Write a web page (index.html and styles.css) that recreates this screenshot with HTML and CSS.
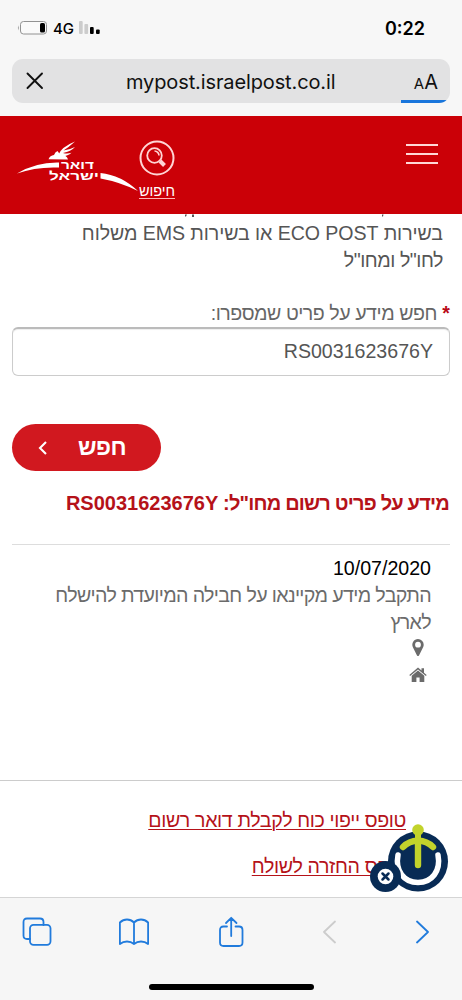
FILE: index.html
```
<!DOCTYPE html>
<html lang="he">
<head>
<meta charset="utf-8">
<title>mypost.israelpost.co.il</title>
<link rel="stylesheet" href="styles.css">
</head>
<body>
<div class="phone">
  <div class="status">
    <svg class="battery" width="32" height="16" viewBox="0 0 32 16"><rect x="3.500" y="1.500" width="26" height="12.500" rx="3" fill="#fafafa" stroke="#929292"/><path d="M1.800 5.200Q0 7.800 1.800 10.400Z" fill="#999"/><rect x="23" y="3" width="5" height="9.500" rx="1.600" fill="#000"/></svg>
    <span class="network">4G</span>
    <svg class="signal" width="23" height="15" viewBox="0 0 23 15"><rect x="1" y="1" width="3.700" height="13" rx="1" fill="#ccc"/><rect x="6.400" y="4" width="3.700" height="10" rx="1" fill="#ccc"/><rect x="12" y="7" width="3.700" height="7" rx="1"/><rect x="18" y="9.500" width="3.700" height="4.500" rx="1"/></svg>
    <span class="clock">0:22</span>
  </div>
  <div class="address-wrap">
    <div class="address">
      <svg class="close" width="18" height="18" viewBox="0 0 18 18"><path d="M1.500 1.500 16 16M16 1.500 1.500 16" fill="none" stroke="#111" stroke-width="1.900" stroke-linecap="round"/></svg>
      <span class="url">mypost.israelpost.co.il</span>
      <span class="reader"><small>A</small>A</span>
      <div class="progress"></div>
    </div>
  </div>
  <header class="header">
    <svg class="logo" width="124" height="56" viewBox="0 0 124 56">
      <path d="M1 35.500Q20 24 43 24.500V29.500Q20 28.500 1 35.500Z" fill="#fff"/>
      <path d="M84.500 35Q105 37 122 53Q104 44 84.500 40.500Z" fill="#fff"/>
      <path d="M32.500 21.200Q34 17.500 38 17Q39 14 41.500 13L44 16.500Q51 17 52 21.500Z" fill="#fff"/>
      <path d="M42 17.500Q45 9 59 3.500Q53 9 47.500 12.500Q53 12 59 9Q55 13.500 47 15Q51 16.300 55.500 14.800Q51 19 44 18Z" fill="#fff"/>
      <text class="logo-text" x="45" y="31" textLength="33" lengthAdjust="spacingAndGlyphs">דואר</text>
      <text class="logo-text" x="33" y="42" textLength="50" lengthAdjust="spacingAndGlyphs">ישראל</text>
    </svg>
    <div class="search">
      <svg width="36" height="36" viewBox="0 0 36 36" fill="none" stroke="#ffd5d5"><circle cx="18" cy="18" r="16.500" stroke-width="2"/><circle cx="15.500" cy="15.500" r="7.300" stroke-width="1.800"/><path d="M15.500 11a4.500 4.500 0 0 1 4.500 4.500" stroke-width="1.600"/><path d="m21 21 4.500 4.500" stroke-width="4"/></svg>
      <span class="search-label" dir="rtl">חיפוש</span>
    </div>
    <div class="menu"><i></i><i></i><i></i></div>
  </header>
  <main class="content" dir="rtl">
    <svg class="cut" width="462" height="5" viewBox="0 0 462 5" fill="#555"><path d="M185 0h2l-1 2h-1zM192 0h2v2.500h-2zM382 0h1.500l-.5 2h-1z"/></svg>
    <p class="line intro intro-a">בשירות ECO POST או בשירות EMS משלוח</p>
    <p class="line intro intro-b">לחו"ל ומחו"ל</p>
    <div class="label"><b>*</b> <span>חפש מידע על פריט שמספרו:</span></div>
    <div class="input">RS0031623676Y</div>
    <div class="button"><span>חפש</span><svg width="10" height="16" viewBox="0 0 10 16"><path d="M8 2 2 8l6 6" fill="none" stroke="#fff" stroke-width="2.100"/></svg></div>
    <h2 class="title"><span>מידע על פריט רשום מחו"ל: </span>RS0031623676Y</h2>
    <section class="result">
      <p class="line date">10/07/2020</p>
      <p class="line info">התקבל מידע מקיינאו על חבילה המיועדת להישלח</p>
      <p class="line info">לארץ</p>
      <div class="icon-row"><svg width="12" height="18" viewBox="0 0 12 18"><path fill="#6b6b6b" fill-rule="evenodd" d="M6 0a5.700 5.700 0 0 1 5.700 5.700c0 1-.2 1.700-.6 2.500L7 16.500q-1 1.200-2 0L.9 8.200A5.700 5.700 0 0 1 6 0Zm0 2.800a2.900 2.900 0 1 0 0 5.800 2.900 2.900 0 0 0 0-5.800Z"/></svg></div>
      <div class="icon-row"><svg class="home" width="18" height="16" viewBox="0 0 18 16" fill="#6b6b6b"><path d="m9 3.500 6.300 5.300V15h-4.700v-4.400H7.400V15H2.700V8.800Z"/><path d="M9 .5 12.500 3.500V1.200H15v4.500l2.700 2.300-.8 1L9 2.400 1.100 9l-.8-1Z"/></svg></div>
    </section>
    <nav class="links">
      <a class="link-a">טופס ייפוי כוח לקבלת דואר רשום</a>
      <a class="link-b">טופס החזרה לשולח</a>
    </nav>
    <svg class="access" width="82" height="72" viewBox="0 0 82 72">
      <circle cx="51" cy="39.500" r="30" fill="#082b55"/>
      <path d="M31 33C28 49 37 60.500 51 60.500S74 49 71 33" fill="none" stroke="#fff" stroke-width="5.500" stroke-linecap="round"/>
      <circle cx="51" cy="8" r="5.800" fill="#c2d32b"/>
      <path d="M36 25Q42 19 51 18.500Q60 19 66 25M51 19V43" fill="none" stroke="#c2d32b" stroke-width="6.400" stroke-linecap="round"/>
      <path d="M51 10V19" stroke="#c2d32b" stroke-width="6"/>
      <circle cx="18.500" cy="54.500" r="15.500" fill="#082b55"/><circle cx="18.500" cy="54.500" r="7.800" fill="#fff"/>
      <path d="m15.500 51.500 6 6m0-6-6 6" stroke="#082b55" stroke-width="2.500" stroke-linecap="round"/>
    </svg>
  </main>
  <footer class="toolbar">
    <div class="tools">
      <svg class="tabs" width="30" height="30" viewBox="0 0 30 30"><path d="M8 22H5q-3.500 0-3.500-3.500V5Q1.500 1.500 5 1.500h13Q21.500 1.500 21.500 5v3"/><rect x="8" y="7.800" width="20.500" height="20" rx="3.500"/></svg>
      <svg class="book" width="30" height="30" viewBox="0 0 30 30"><path d="M15 5.500Q12 2.500 8 2.500T.9 5.500V27Q4 24.500 8 24.500t7 2.500q3-2.500 7-2.500t7.100 2.500V5.500Q26 2.500 22 2.500t-7 3ZM15 5.500V27"/></svg>
      <svg class="share" width="26" height="32" viewBox="0 0 26 32"><path d="M9 10.500H5.500Q2 10.500 2 14v12.500Q2 30 5.500 30h15.500q3.500 0 3.500-3.500V14q0-3.500-3.500-3.500H17.500M13.200 20V2M8 7l5.200-5.200L18.500 7"/></svg>
      <svg class="back" width="14" height="24" viewBox="0 0 14 24"><path d="M13 1.500 2 12l11 10.500"/></svg>
      <svg class="forward" width="14" height="24" viewBox="0 0 14 24"><path d="M1 1.500 12 12 1 22.500"/></svg>
    </div>
    <div class="home-bar"></div>
  </footer>
</div>
</body>
</html>
```

FILE: styles.css
```
* { box-sizing: border-box; }
body { margin: 0; background: #fff; font-family: "Liberation Sans", Arial, sans-serif; }
svg { display: block; flex: none; }
p, h2 { margin: 0; }
.phone { width: 462px; height: 1000px; overflow: hidden; display: flex; flex-direction: column; background: #fff; }
.status { height: 59px; background: #f7f7f7; display: flex; padding: 20px 37px 0 17px; align-items: flex-start; font-family: Inter, sans-serif; }
.network { font-size: 15px; line-height: 18px; margin-left: 4px; font-weight: 500; width: 20px; }
.signal { margin-left: 5px; }
.clock { margin-left: auto; font-size: 18px; line-height: 18px; font-weight: 600; }
.address-wrap { height: 57px; padding: 0 12px; background: #f7f7f7; }
.address { position: relative; overflow: hidden; height: 44px; background: #e2e2e3; border-radius: 11px; display: flex; align-items: center; padding: 0 12px 0 14px; font-family: Inter, sans-serif; color: #111; }
.url { margin-left: 82px; font-size: 20px; letter-spacing: -.12px; line-height: 24px; padding-top: 1px; white-space: nowrap; }
.reader { margin-left: auto; font-size: 20px; padding-top: 2px; }
.reader small { font-size: 15px; }
.progress { position: absolute; right: 0; bottom: 0; width: 49px; height: 3px; background: #1976dc; }
.header { height: 98px; background: #cb0007; display: flex; align-items: flex-start; padding: 0 24px 0 16px; }
.logo { margin-top: 22px; }
.logo-text { font: bold 12px "Liberation Sans", sans-serif; fill: #fff; }
.search { width: 36px; margin-top: 24px; margin-left: -1px; display: flex; flex-direction: column; align-items: center; color: #fff; }
.search-label { font-size: 14.500px; line-height: 16px; margin-top: 7px; border-bottom: 1px solid #ffb5b5; white-space: nowrap; height: 16px; }
.menu { margin: 28px 0 0 auto; width: 32px; display: flex; flex-direction: column; gap: 7.500px; }
.menu i { height: 1.500px; background: #ffd7d7; }
.content { position: relative; height: 683px; display: flex; flex-direction: column; font-size: 19.600px; }
.cut { height: 6px; }
.line { line-height: 27px; height: 27px; white-space: nowrap; }
.intro { padding-right: 19px; color: #555; }
.intro-a { letter-spacing: -.08px; }
.intro-b { letter-spacing: -.45px; }
.label { height: 27px; line-height: 27px; margin: 26px 0 0; padding-right: 12px; color: #666; white-space: nowrap; }
.label b { color: #b90916; }
.label span { letter-spacing: -.46px; }
.input { direction: ltr; text-align: right; margin: 0 12px; height: 49px; border: 1px solid #ccc; border-top: 2px solid #bbb; border-radius: 6px; line-height: 44px; padding-right: 16px; color: #555; box-shadow: inset 0 1px 1px #eee; }
.button { align-self: flex-end; margin: 48px 0 0 12px; width: 149px; height: 47px; border-radius: 24px; background: #d1181f; color: #fff; display: flex; align-items: center; justify-content: space-between; padding: 0 35px 0 26px; font-size: 23px; font-weight: bold; }
.button span { letter-spacing: -.5px; }
.title { margin: 19px 13px 0; height: 27px; line-height: 27px; font-size: 20px; color: #b51219; white-space: nowrap; }
.title span { letter-spacing: -.8px; }
.result { margin: 27px 12px 0; height: 236px; border-top: 1px solid #ddd; padding: 10px 19px 0; color: #6b6b6b; }
.date { color: #000; }
.info { letter-spacing: -.63px; }
.icon-row { height: 27px; padding: 3px 7px 0 0; }
.icon-row + .icon-row { padding-top: 4px; }
.home { margin-right: -3px; }
.links { border-top: 1px solid #ccc; padding: 26px 56px 0 0; display: flex; flex-direction: column; align-items: flex-start; gap: 19px; }
.links a { line-height: 27px; letter-spacing: -.36px; color: #b51219; text-decoration: underline; text-underline-offset: 2px; text-decoration-thickness: 1px; white-space: nowrap; }
.access { position: absolute; left: 367px; top: 608px; }
.toolbar { height: 103px; border-top: 1px solid #d5d5d5; background: #f6f6f6; display: flex; flex-direction: column; align-items: center; }
.tools { width: 100%; height: 67px; padding-left: 22px; display: flex; align-items: center; }
.tools svg { fill: none; stroke: #217bdc; stroke-width: 1.800; stroke-linejoin: round; stroke-linecap: round; }
.tools svg.back { stroke: #ccc; }
.book { margin-left: 67px; }
.share { margin-left: 69px; }
.back { margin-left: 78px; }
.forward { margin-left: 80px; }
.home-bar { margin-top: 19px; width: 165px; height: 6px; border-radius: 3px; background: #000; }
```
